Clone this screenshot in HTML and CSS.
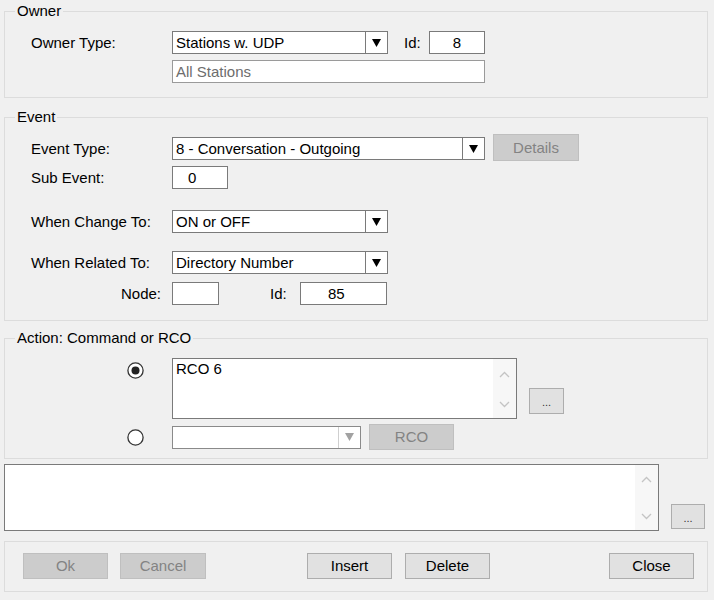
FILE: index.html
```html
<!DOCTYPE html>
<html>
<head>
<meta charset="utf-8">
<title>Event Action</title>
<link rel="stylesheet" href="styles.css">
</head>
<body>

<fieldset class="group owner">
  <legend>Owner</legend>
  <div class="row r-owner1">
    <span class="lbl">Owner Type:</span>
    <div class="combo w216">
      <span class="val">Stations w. UDP</span>
      <span class="drop"><svg width="9" height="8" viewBox="0 0 9 8"><polygon points="0,0 9,0 4.5,8" fill="#000"/></svg></span>
    </div>
    <span class="idlbl">Id:</span>
    <div class="field w56 center">8</div>
  </div>
  <div class="row r-owner2">
    <div class="field w313 muted">All Stations</div>
  </div>
</fieldset>

<fieldset class="group event">
  <legend>Event</legend>
  <div class="row r-ev1">
    <span class="lbl">Event Type:</span>
    <div class="combo w313">
      <span class="val">8 - Conversation - Outgoing</span>
      <span class="drop"><svg width="9" height="8" viewBox="0 0 9 8"><polygon points="0,0 9,0 4.5,8" fill="#000"/></svg></span>
    </div>
    <button class="btn disabled details">Details</button>
  </div>
  <div class="row r-ev2">
    <span class="lbl">Sub Event:</span>
    <div class="field w56 pad15">0</div>
  </div>
  <div class="row r-ev3">
    <span class="lbl">When Change To:</span>
    <div class="combo w216">
      <span class="val">ON or OFF</span>
      <span class="drop"><svg width="9" height="8" viewBox="0 0 9 8"><polygon points="0,0 9,0 4.5,8" fill="#000"/></svg></span>
    </div>
  </div>
  <div class="row r-ev4">
    <span class="lbl">When Related To:</span>
    <div class="combo w216">
      <span class="val">Directory Number</span>
      <span class="drop"><svg width="9" height="8" viewBox="0 0 9 8"><polygon points="0,0 9,0 4.5,8" fill="#000"/></svg></span>
    </div>
  </div>
  <div class="row r-ev5">
    <span class="lbl right">Node:</span>
    <div class="field w47"></div>
    <span class="idlbl2">Id:</span>
    <div class="field w87 pad28">85</div>
  </div>
</fieldset>

<fieldset class="group action">
  <legend>Action: Command or RCO</legend>
  <div class="row r-act1">
    <span class="radio checked"><svg width="17" height="17" viewBox="0 0 17 17"><circle cx="8.5" cy="8.5" r="7.6" fill="#fff" stroke="#333" stroke-width="1.3"/><circle cx="8.5" cy="8.5" r="4" fill="#222"/></svg></span>
    <div class="memo w345 h61">
      <div class="memo-text">RCO 6</div>
      <div class="sbar">
        <svg width="11" height="7" viewBox="0 0 11 7"><polyline points="1,6 5.5,1.5 10,6" fill="none" stroke="#c4c4c4" stroke-width="1.3"/></svg>
        <svg width="11" height="7" viewBox="0 0 11 7"><polyline points="1,1 5.5,5.5 10,1" fill="none" stroke="#c4c4c4" stroke-width="1.3"/></svg>
      </div>
    </div>
    <button class="btn dots">...</button>
  </div>
  <div class="row r-act2">
    <span class="radio"><svg width="17" height="17" viewBox="0 0 17 17"><circle cx="8.5" cy="8.5" r="7.6" fill="#fff" stroke="#333" stroke-width="1.3"/></svg></span>
    <div class="combo w189 dis">
      <span class="val"></span>
      <span class="drop"><svg width="9" height="8" viewBox="0 0 9 8"><polygon points="0,0 9,0 4.5,8" fill="#a2a2a2"/></svg></span>
    </div>
    <button class="btn disabled rco">RCO</button>
  </div>
</fieldset>

<div class="memo-row">
  <div class="memo w655 h67">
    <div class="memo-text"></div>
    <div class="sbar sbar2">
      <svg width="11" height="7" viewBox="0 0 11 7"><polyline points="1,6 5.5,1.5 10,6" fill="none" stroke="#c4c4c4" stroke-width="1.3"/></svg>
      <svg width="11" height="7" viewBox="0 0 11 7"><polyline points="1,1 5.5,5.5 10,1" fill="none" stroke="#c4c4c4" stroke-width="1.3"/></svg>
    </div>
  </div>
  <button class="btn dots dots2">...</button>
</div>

<div class="btnbar">
  <button class="btn disabled b-ok">Ok</button>
  <button class="btn disabled b-cancel">Cancel</button>
  <button class="btn b-insert">Insert</button>
  <button class="btn b-delete">Delete</button>
  <button class="btn b-close">Close</button>
</div>

</body>
</html>
```

FILE: styles.css
```css
* { box-sizing: border-box; }

html, body {
  margin: 0;
  padding: 0;
  background: #f0f0f0;
}

body {
  width: 714px;
  height: 600px;
  overflow: hidden;
  padding-top: 3px;
  font-family: "Liberation Sans", Arial, sans-serif;
  font-size: 15px;
  color: #000;
}

/* group boxes */
.group {
  margin: 0 6px 0 4px;
  padding: 0 0 0 10px;
  border: 1px solid #dcdcdc;
  min-width: 0;
}

.group legend {
  padding: 0 2px;
  height: 16px;
  line-height: 16px;
  color: #000;
}

.owner { padding-top: 12px; padding-bottom: 14px; }
.event { margin-top: 11px; padding-top: 9px; padding-bottom: 15px; }
.action { margin-top: 9px; padding-top: 12px; padding-bottom: 8px; }

/* rows */
.row {
  display: flex;
  align-items: center;
}

.lbl {
  width: 141px;
  margin-left: 16px;
  flex: none;
  white-space: nowrap;
}

.lbl.right {
  text-align: right;
  padding-right: 11px;
}

.r-owner2 { margin-top: 6px; padding-left: 157px; }

.idlbl {
  width: 25px;
  margin-left: 16px;
  flex: none;
}

.idlbl2 {
  width: 30px;
  margin-left: 51px;
  flex: none;
}

.r-ev1 { align-items: flex-start; }
.r-ev1 .lbl { margin-top: 3px; line-height: 23px; }
.r-ev1 .combo { margin-top: 3px; }
.r-ev2 { margin-top: 5px; }
.r-ev3 { margin-top: 21px; }
.r-ev4 { margin-top: 18px; }
.r-ev5 { margin-top: 8px; }

/* inputs */
.field, .combo, .memo {
  background: #fff;
  border: 1px solid #7a7a7a;
  flex: none;
}

.field {
  height: 23px;
  line-height: 21px;
  padding: 0 3px;
  white-space: nowrap;
}

.field.center { text-align: center; }
.field.pad15 { padding-left: 15px; }
.field.pad28 { padding-left: 27px; }
.field.muted { color: #6d6d6d; border-color: #9a9a9a; }

.w47 { width: 47px; }
.w56 { width: 56px; }
.w87 { width: 87px; }
.w189 { width: 189px; }
.w216 { width: 216px; }
.w313 { width: 313px; }
.w345 { width: 345px; }
.w655 { width: 655px; }
.h61 { height: 61px; }
.h67 { height: 67px; }

.combo {
  height: 23px;
  display: flex;
}

.combo .val {
  flex: 1;
  padding-left: 3px;
  line-height: 21px;
  white-space: nowrap;
  overflow: hidden;
}

.combo .drop {
  width: 22px;
  flex: none;
  border-left: 1px solid #7a7a7a;
  display: flex;
  align-items: center;
  justify-content: center;
}

.combo.dis .drop { border-left-color: #cfcfcf; }
.combo.dis { border-color: #8a8a8a; }

/* memo boxes */
.memo {
  display: flex;
}

.memo-text {
  flex: 1;
  padding: 1px 3px;
  line-height: 18px;
}

.sbar {
  width: 23px;
  flex: none;
  background: #f7f7f7;
  display: flex;
  flex-direction: column;
  justify-content: space-between;
  align-items: center;
  padding: 12px 0 10px;
}

.sbar2 { padding: 11px 0 10px; }

/* buttons */
.btn {
  font: inherit;
  font-size: 15px;
  height: 26px;
  padding: 0;
  background: #e1e1e1;
  border: 1px solid #adadad;
  color: #000;
  flex: none;
  line-height: 24px;
}

.btn.disabled {
  background: #cccccc;
  border-color: #bfbfbf;
  color: #838383;
}

.details { width: 86px; height: 27px; margin-left: 8px; }

.dots {
  width: 35px;
  font-size: 11px;
  line-height: 26px;
  color: #333;
}

/* action rows */
.radio {
  display: block;
  width: 17px;
  height: 17px;
  margin-left: 112px;
  margin-right: 28px;
  flex: none;
}

.radio svg { display: block; }

.r-act1 { align-items: flex-start; }
.r-act1 .radio { margin-top: 4px; }
.r-act1 .dots { margin-left: 12px; margin-top: 30px; }
.r-act2 { margin-top: 5px; }
.r-act2 .combo { margin-top: 0; }
.rco { width: 85px; margin-left: 8px; }

/* bottom memo */
.memo-row {
  display: flex;
  align-items: flex-end;
  margin: 5px 0 0 4px;
}

.dots2 {
  width: 34px;
  height: 25px;
  margin-left: 12px;
  margin-bottom: 2px;
}

/* bottom button bar */
.btnbar {
  margin: 10px 6px 0 4px;
  height: 51px;
  border: 1px solid #dcdcdc;
  display: flex;
  align-items: flex-start;
  padding-top: 11px;
}

.b-ok { width: 85px; margin-left: 18px; }
.b-cancel { width: 86px; margin-left: 12px; }
.b-insert { width: 85px; margin-left: 101px; }
.b-delete { width: 85px; margin-left: 13px; }
.b-close { width: 85px; margin-left: 119px; }
```
